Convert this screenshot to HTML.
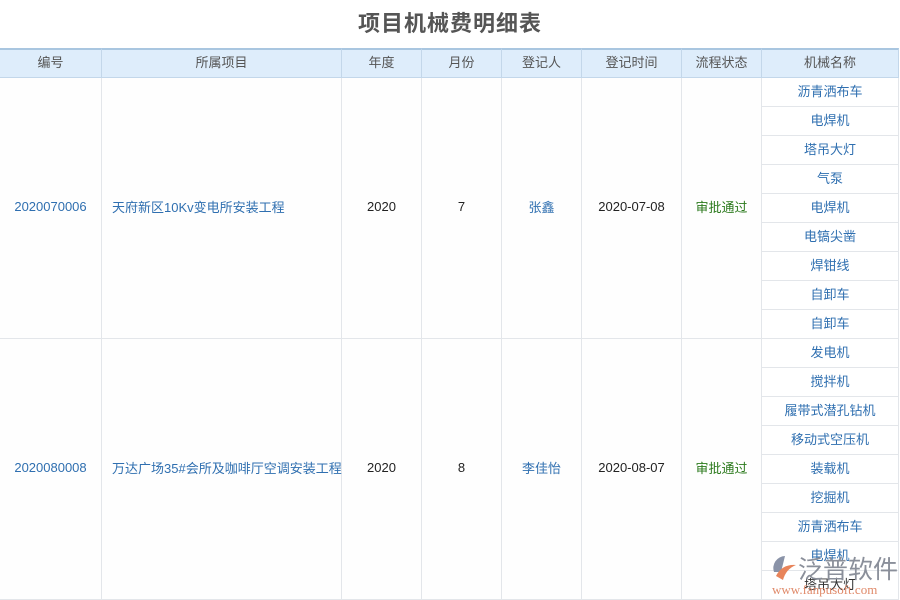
<!DOCTYPE html>
<html><head><meta charset="utf-8"><style>
*{margin:0;padding:0;box-sizing:border-box}
body{width:900px;height:600px;overflow:hidden;background:#fff;font-family:"Liberation Sans","Noto Sans CJK SC",sans-serif;font-size:13px;position:relative}
.t{position:absolute;left:0;top:6px;width:900px;text-align:center;font-size:22px;font-weight:bold;color:#555;letter-spacing:1px}
.c{position:absolute;display:flex;align-items:center;justify-content:center;border-right:1px solid #e3e6ea;border-bottom:1px solid #e3e6ea;white-space:nowrap;padding-bottom:4px}
.h{background:#deedfb;color:#555;border-color:#c3d7ea;top:48px;height:30px;border-top:2px solid #a9c6e0}
.b{color:#2f6fb0}
.k{color:#222}
.g{color:#2c7a1d}
.m{color:#2f6fb0;background:#fff}
.l{background:#fefefe}
</style></head><body>
<div class="t">项目机械费明细表</div>

<div class="c h" style="left:0;width:102px">编号</div>
<div class="c h" style="left:102px;width:240px">所属项目</div>
<div class="c h" style="left:342px;width:80px">年度</div>
<div class="c h" style="left:422px;width:80px">月份</div>
<div class="c h" style="left:502px;width:80px">登记人</div>
<div class="c h" style="left:582px;width:100px">登记时间</div>
<div class="c h" style="left:682px;width:80px">流程状态</div>
<div class="c h" style="left:762px;width:137px">机械名称</div>

<div class="c l b" style="left:0;top:78px;width:102px;height:261px">2020070006</div>
<div class="c l b" style="left:102px;top:78px;width:240px;height:261px;justify-content:flex-start;padding-left:10px">天府新区10Kv变电所安装工程</div>
<div class="c l k" style="left:342px;top:78px;width:80px;height:261px">2020</div>
<div class="c l k" style="left:422px;top:78px;width:80px;height:261px">7</div>
<div class="c l b" style="left:502px;top:78px;width:80px;height:261px">张鑫</div>
<div class="c l k" style="left:582px;top:78px;width:100px;height:261px">2020-07-08</div>
<div class="c l g" style="left:682px;top:78px;width:80px;height:261px">审批通过</div>

<div class="c l b" style="left:0;top:339px;width:102px;height:261px">2020080008</div>
<div class="c l b" style="left:102px;top:339px;width:240px;height:261px;justify-content:flex-start;padding-left:10px">万达广场35#会所及咖啡厅空调安装工程</div>
<div class="c l k" style="left:342px;top:339px;width:80px;height:261px">2020</div>
<div class="c l k" style="left:422px;top:339px;width:80px;height:261px">8</div>
<div class="c l b" style="left:502px;top:339px;width:80px;height:261px">李佳怡</div>
<div class="c l k" style="left:582px;top:339px;width:100px;height:261px">2020-08-07</div>
<div class="c l g" style="left:682px;top:339px;width:80px;height:261px">审批通过</div>

<div class="c m" style="left:762px;top:78px;width:137px;height:29px">沥青洒布车</div>
<div class="c m" style="left:762px;top:107px;width:137px;height:29px">电焊机</div>
<div class="c m" style="left:762px;top:136px;width:137px;height:29px">塔吊大灯</div>
<div class="c m" style="left:762px;top:165px;width:137px;height:29px">气泵</div>
<div class="c m" style="left:762px;top:194px;width:137px;height:29px">电焊机</div>
<div class="c m" style="left:762px;top:223px;width:137px;height:29px">电镐尖凿</div>
<div class="c m" style="left:762px;top:252px;width:137px;height:29px">焊钳线</div>
<div class="c m" style="left:762px;top:281px;width:137px;height:29px">自卸车</div>
<div class="c m" style="left:762px;top:310px;width:137px;height:29px">自卸车</div>
<div class="c m" style="left:762px;top:339px;width:137px;height:29px">发电机</div>
<div class="c m" style="left:762px;top:368px;width:137px;height:29px">搅拌机</div>
<div class="c m" style="left:762px;top:397px;width:137px;height:29px">履带式潜孔钻机</div>
<div class="c m" style="left:762px;top:426px;width:137px;height:29px">移动式空压机</div>
<div class="c m" style="left:762px;top:455px;width:137px;height:29px">装载机</div>
<div class="c m" style="left:762px;top:484px;width:137px;height:29px">挖掘机</div>
<div class="c m" style="left:762px;top:513px;width:137px;height:29px">沥青洒布车</div>
<div class="c m" style="left:762px;top:542px;width:137px;height:29px">电焊机</div>
<div class="c m" style="left:762px;top:571px;width:137px;height:29px;color:#333">塔吊大灯</div>

<div style="position:absolute;left:770px;top:553px;width:130px;height:47px;pointer-events:none">
<svg width="26" height="26" style="position:absolute;left:2px;top:2px" viewBox="0 0 26 26"><path d="M13 1 A12 12 0 0 0 2 17 L9 17 Z" fill="#8a93a8"/><path d="M4 21 Q10 9 24 10 Q14 14 11 25 Z" fill="#e8845a"/></svg>
<div style="position:absolute;left:28px;top:-3px;font-size:25px;color:#8a8f9a">泛普软件</div>
<div style="position:absolute;left:2px;top:29px;font-size:13px;color:#e08a6a;font-family:'Liberation Serif',serif">www.fanpusoft.com</div>
</div>
</body></html>
